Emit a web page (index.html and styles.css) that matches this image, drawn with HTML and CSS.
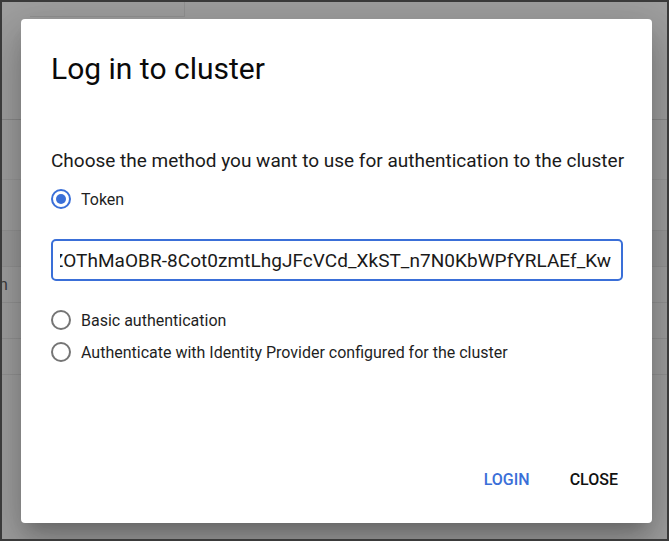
FILE: index.html
```html
<!DOCTYPE html>
<html lang="en">
<head>
<meta charset="utf-8">
<title>Log in to cluster</title>
<link rel="stylesheet" href="styles.css">
</head>
<body>
<div class="frame">
  <div class="page">
    <div class="page-top">
      <div class="top-card"></div>
    </div>
    <div class="page-gap"></div>
    <div class="page-row"></div>
    <div class="page-row page-head"></div>
    <div class="page-row"><span class="cell-text">n</span></div>
    <div class="page-row"></div>
    <div class="page-row"></div>
  </div>

  <div class="dialog" role="dialog" aria-labelledby="dlg-title">
    <h1 class="dialog-title" id="dlg-title">Log in to cluster</h1>
    <p class="prompt">Choose the method you want to use for authentication to the cluster</p>

    <label class="radio-row token-row">
      <span class="radio radio-checked"><span class="radio-dot"></span></span>
      <span class="radio-label">Token</span>
    </label>

    <div class="token-field">
      <div class="token-clip">
        <span class="token-text">eyJhbGciOiJSUzI1NiIsImtpZCI6IjZOThMaOBR-8Cot0zmtLhgJFcVCd_XkST_n7N0KbWPfYRLAEf_Kw</span>
      </div>
    </div>

    <label class="radio-row basic-row">
      <span class="radio"></span>
      <span class="radio-label">Basic authentication</span>
    </label>
    <label class="radio-row idp-row">
      <span class="radio"></span>
      <span class="radio-label">Authenticate with Identity Provider configured for the cluster</span>
    </label>

    <div class="dialog-actions">
      <button class="btn btn-primary" type="button">LOGIN</button>
      <button class="btn btn-plain" type="button">CLOSE</button>
    </div>
  </div>
</div>
</body>
</html>
```

FILE: styles.css
```css
* { box-sizing: border-box; }

html, body {
  margin: 0;
  padding: 0;
}

body {
  width: 669px;
  height: 541px;
  overflow: hidden;
  font-family: Roboto, "Noto Sans", "Liberation Sans", sans-serif;
}

.frame {
  position: relative;
  width: 669px;
  height: 541px;
  border: 2px solid #3a3a3a;
  background: #9f9f9f;
  overflow: hidden;
}

.page {
  display: flex;
  flex-direction: column;
}

.page-top {
  height: 118px;
  border-bottom: 1px solid #8a8a8a;
  padding: 0 0 0 28px;
}

.top-card {
  width: 155px;
  height: 15px;
  border-right: 1px solid #929292;
  border-bottom: 1px solid #929292;
}

.page-gap {
  height: 60px;
  border-bottom: 1px solid #979797;
}

.page-row {
  height: 51px;
  border-bottom: 1px solid #939393;
  display: flex;
  align-items: center;
}

.page-head {
  height: 36px;
  background: #9a9a9a;
}

.page-row:nth-child(n+5) {
  height: 36px;
}

.cell-text {
  margin-left: -3px;
  font-size: 16px;
  color: #3c3c3c;
}

/* dialog */
.dialog {
  position: absolute;
  left: 19px;
  top: 17px;
  width: 631px;
  height: 504px;
  background: #ffffff;
  border-radius: 4px;
  box-shadow: 0 11px 15px -7px rgba(0,0,0,.2), 0 24px 38px 3px rgba(0,0,0,.14), 0 9px 46px 8px rgba(0,0,0,.12);
  padding: 34px 30px 25px 30px;
  display: flex;
  flex-direction: column;
}

.dialog-title {
  margin: 0;
  font-size: 30px;
  line-height: 32px;
  font-weight: 400;
  color: #0a0a0a;
}

.prompt {
  margin: 66px 0 0 0;
  font-size: 19px;
  line-height: 20px;
  color: #1a1a1a;
  white-space: nowrap;
}

.radio-row {
  display: flex;
  align-items: center;
  height: 24px;
  gap: 10px;
  font-size: 16px;
  color: #1f1f1f;
}

.token-row { margin-top: 16px; }
.basic-row { margin-top: 27px; }
.idp-row { margin-top: 8px; }

.radio {
  width: 20px;
  height: 20px;
  border-radius: 50%;
  border: 2px solid #757575;
  display: flex;
  align-items: center;
  justify-content: center;
  flex: none;
}

.radio-checked {
  border-color: #3a6fd8;
}

.radio-dot {
  width: 10px;
  height: 10px;
  border-radius: 50%;
  background: #3a6fd8;
}

.token-field {
  margin-top: 28px;
  height: 42px;
  width: 572px;
  border: 2px solid #3a6fd8;
  border-radius: 5px;
  padding: 0 10px 0 7px;
  display: flex;
  align-items: center;
}

.token-clip {
  flex: 1;
  min-width: 0;
  display: flex;
  justify-content: flex-end;
  overflow: hidden;
  white-space: nowrap;
}

.token-text {
  flex: none;
  font-size: 19px;
  letter-spacing: 0.04px;
  color: #1a1a1a;
}

.dialog-actions {
  margin-top: auto;
  display: flex;
  justify-content: flex-end;
  gap: 16px;
  margin-right: -8px;
}

.btn {
  font-family: Roboto, "Noto Sans", "Liberation Sans", sans-serif;
  font-size: 16px;
  font-weight: 500;
  line-height: 20px;
  padding: 8px 12px;
  border: 0;
  background: transparent;
  border-radius: 4px;
}

.btn-primary { color: #3a6fd8; }
.btn-plain { color: #111111; }
```
